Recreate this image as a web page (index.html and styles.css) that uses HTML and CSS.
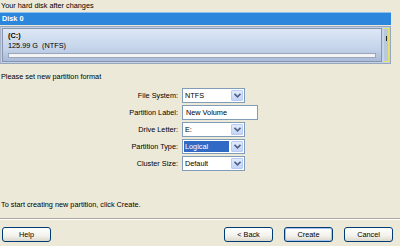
FILE: index.html
```html
<!DOCTYPE html>
<html>
<head>
<meta charset="utf-8">
<link rel="stylesheet" href="styles.css">
</head>
<body>
<div class="page">
  <div class="caption">Your hard disk after changes</div>
  <div class="disk">
    <div class="disk-title">Disk 0</div>
    <div class="disk-body">
      <div class="part">
        <div class="part-name">(C:)</div>
        <div class="part-size">125.99 G&nbsp; (NTFS)</div>
        <div class="usage"></div>
      </div>
      <div class="free"><span class="tick"></span></div>
    </div>
  </div>
  <div class="caption prompt">Please set new partition format</div>
  <div class="form">
    <div class="label">File System:</div>
    <div class="select"><span class="value">NTFS</span><span class="arrow"><svg width="7" height="5" viewBox="0 0 7 5"><path d="M0.5 0.8 L3.5 3.8 L6.5 0.8" fill="none" stroke="#4d6185" stroke-width="1.6"/></svg></span></div>
    <div class="label">Partition Label:</div>
    <div class="input">New Volume</div>
    <div class="label">Drive Letter:</div>
    <div class="select"><span class="value">E:</span><span class="arrow"><svg width="7" height="5" viewBox="0 0 7 5"><path d="M0.5 0.8 L3.5 3.8 L6.5 0.8" fill="none" stroke="#4d6185" stroke-width="1.6"/></svg></span></div>
    <div class="label">Partition Type:</div>
    <div class="select"><span class="value selected">Logical</span><span class="arrow"><svg width="7" height="5" viewBox="0 0 7 5"><path d="M0.5 0.8 L3.5 3.8 L6.5 0.8" fill="none" stroke="#4d6185" stroke-width="1.6"/></svg></span></div>
    <div class="label">Cluster Size:</div>
    <div class="select"><span class="value">Default</span><span class="arrow"><svg width="7" height="5" viewBox="0 0 7 5"><path d="M0.5 0.8 L3.5 3.8 L6.5 0.8" fill="none" stroke="#4d6185" stroke-width="1.6"/></svg></span></div>
  </div>
  <div class="caption hint">To start creating new partition, click Create.</div>
  <div class="sep"></div>
  <div class="buttons">
    <div class="btn">Help</div>
    <div class="btn back">&lt; Back</div>
    <div class="btn default">Create</div>
    <div class="btn">Cancel</div>
  </div>
</div>
</body>
</html>
```
FILE: styles.css
```css
html, body {
  margin: 0;
  padding: 0;
  background: #ece9d8;
}
.page {
  width: 400px;
  height: 246px;
  font-family: "Liberation Sans", Arial, sans-serif;
  font-size: 7.3px;
  color: #000;
  overflow: hidden;
}
.caption {
  height: 12px;
  line-height: 12px;
  padding-left: 1px;
  white-space: nowrap;
}
.disk {
  width: 391px;
  margin-top: 0;
}
.disk-title {
  height: 12px;
  line-height: 12px;
  border-top: 1px solid #8fc0f2;
  background: #2c86dc;
  color: #fff;
  font-weight: bold;
  padding-left: 2px;
}
.disk-body {
  margin-top: 1px;
  height: 38px;
  display: flex;
  border: 1px solid #98a6bd;
  border-left-color: #a9b6cb;
  background: #c4d2e8;
  box-sizing: border-box;
  padding: 1px 1px 1px 1px;
  gap: 1px;
}
.part {
  flex: 1;
  border: 1px solid #8795ae;
  background: linear-gradient(#dde7f6, #c5d4ea 60%, #a9bbd9);
  padding: 2px 5px 0 5px;
  box-sizing: border-box;
}
.part-name {
  font-weight: bold;
  line-height: 10px;
}
.part-size {
  line-height: 9px;
}
.usage {
  margin-top: 3px;
  height: 5px;
  background: #f4f4f4;
  border: 1px solid #9aa6ba;
  box-sizing: border-box;
}
.free {
  width: 6px;
  border: 1px solid #e3e36c;
  background: #b9c8df;
  box-sizing: border-box;
  position: relative;
}
.tick {
  position: absolute;
  left: 2px;
  top: 7px;
  width: 1px;
  height: 5px;
  background: #222;
}
.prompt {
  margin-top: 7px;
}
.form {
  margin-top: 5px;
  display: grid;
  grid-template-columns: 178px auto;
  column-gap: 4px;
  row-gap: 2px;
  justify-items: start;
}
.label {
  justify-self: end;
  line-height: 15px;
  white-space: nowrap;
}
.select, .input {
  height: 15px;
  box-sizing: border-box;
  border: 1px solid #7f9db9;
  background: #fff;
  display: flex;
  align-items: stretch;
}
.select {
  width: 63px;
}
.input {
  width: 76px;
  padding-left: 3px;
  line-height: 13px;
}
.value {
  flex: 1;
  padding-left: 2px;
  line-height: 13px;
  margin: 0;
}
.value.selected {
  background: #316ac5;
  color: #fff;
  margin: 1px 1px 1px 1px;
  line-height: 11px;
  padding-left: 1px;
}
.arrow {
  width: 12px;
  margin: 1px;
  box-sizing: border-box;
  border: 1px solid #b8cbf4;
  border-radius: 1px;
  background: linear-gradient(#e2ebfd, #c3d4f8);
  display: flex;
  align-items: center;
  justify-content: center;
}
.hint {
  margin-top: 28px;
}
.sep {
  margin-top: 7px;
  height: 0;
  border-top: 1px solid #aca899;
  border-bottom: 1px solid #fff;
}
.buttons {
  margin-top: 7px;
  display: flex;
  padding: 0 7px 0 2px;
  gap: 11px;
}
.btn {
  width: 49px;
  height: 15px;
  box-sizing: border-box;
  border: 1px solid #003c74;
  border-radius: 3px;
  background: linear-gradient(#ffffff, #f2f1eb 60%, #dcd8cc);
  text-align: center;
  line-height: 13px;
}
.btn.back {
  margin-left: auto;
}
.btn.default {
  box-shadow: inset 0 0 0 1px #a9c4ee;
}
```
